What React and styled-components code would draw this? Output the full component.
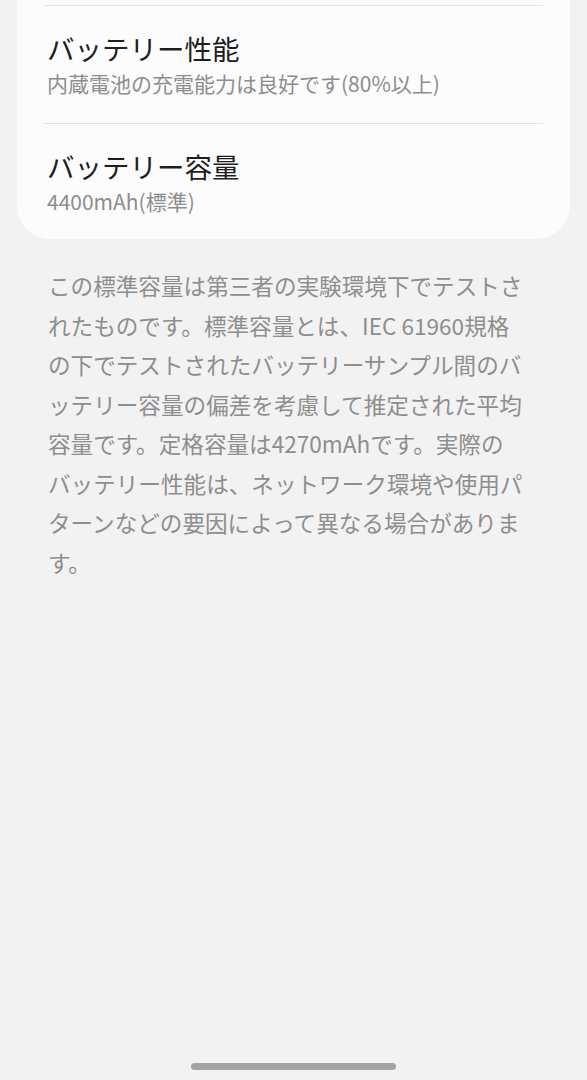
import styled, { createGlobalStyle } from "styled-components";

const GlobalStyle = createGlobalStyle`
  html, body {
    margin: 0;
    padding: 0;
    background: #f2f2f2;
  }
  body {
    font-family: "Noto Sans CJK JP", "Noto Sans", sans-serif;
    -webkit-font-smoothing: antialiased;
  }
`;

const Screen = styled.div`
  width: 587px;
  height: 1080px;
  background: #f2f2f2;
  display: flex;
  flex-direction: column;
  overflow: hidden;
`;

const Card = styled.section`
  margin: 0 17px;
  padding: 5px 27px 0;
  background: #fcfcfc;
  border-radius: 0 0 34px 34px;
  display: flex;
  flex-direction: column;
`;

const Row = styled.div`
  border-top: 1px solid #e3e3e3;
  padding: 25px 0 ${(p) => (p.$last ? 25 : 27)}px 3px;
  display: flex;
  flex-direction: column;
  gap: 5px;
`;

const Title = styled.div`
  font-size: 27.5px;
  line-height: 34px;
  color: #1e1e1e;
`;

const Sub = styled.div`
  font-size: 21px;
  line-height: 26px;
  color: #8d8d8d;
`;

const Note = styled.p`
  margin: 27px 0 0;
  padding: 0 56px 0 48px;
  font-size: 22.6px;
  line-height: 39.5px;
  color: #8e8e8e;
  word-break: break-all;
`;

const Spacer = styled.div`
  flex: 1;
`;

const HomeBar = styled.div`
  align-self: center;
  width: 205px;
  height: 7px;
  border-radius: 4px;
  background: #a3a3a3;
  margin-bottom: 10px;
`;

const rows = [
  { title: "バッテリー性能", sub: "内蔵電池の充電能力は良好です(80%以上)" },
  { title: "バッテリー容量", sub: "4400mAh(標準)" },
];

export default function App() {
  return (
    <Screen>
      <GlobalStyle />
      <Card>
        {rows.map((r, i) => (
          <Row key={r.title} $last={i === rows.length - 1}>
            <Title>{r.title}</Title>
            <Sub>{r.sub}</Sub>
          </Row>
        ))}
      </Card>
      <Note>
        この標準容量は第三者の実験環境下でテストされたものです。標準容量とは、IEC
        61960規格の下でテストされたバッテリーサンプル間のバッテリー容量の偏差を考慮して推定された平均容量です。定格容量は4270mAhです。実際の
        <br />
        バッテリー性能は、ネットワーク環境や使用パターンなどの要因によって異なる場合があります。
      </Note>
      <Spacer />
      <HomeBar />
    </Screen>
  );
}
